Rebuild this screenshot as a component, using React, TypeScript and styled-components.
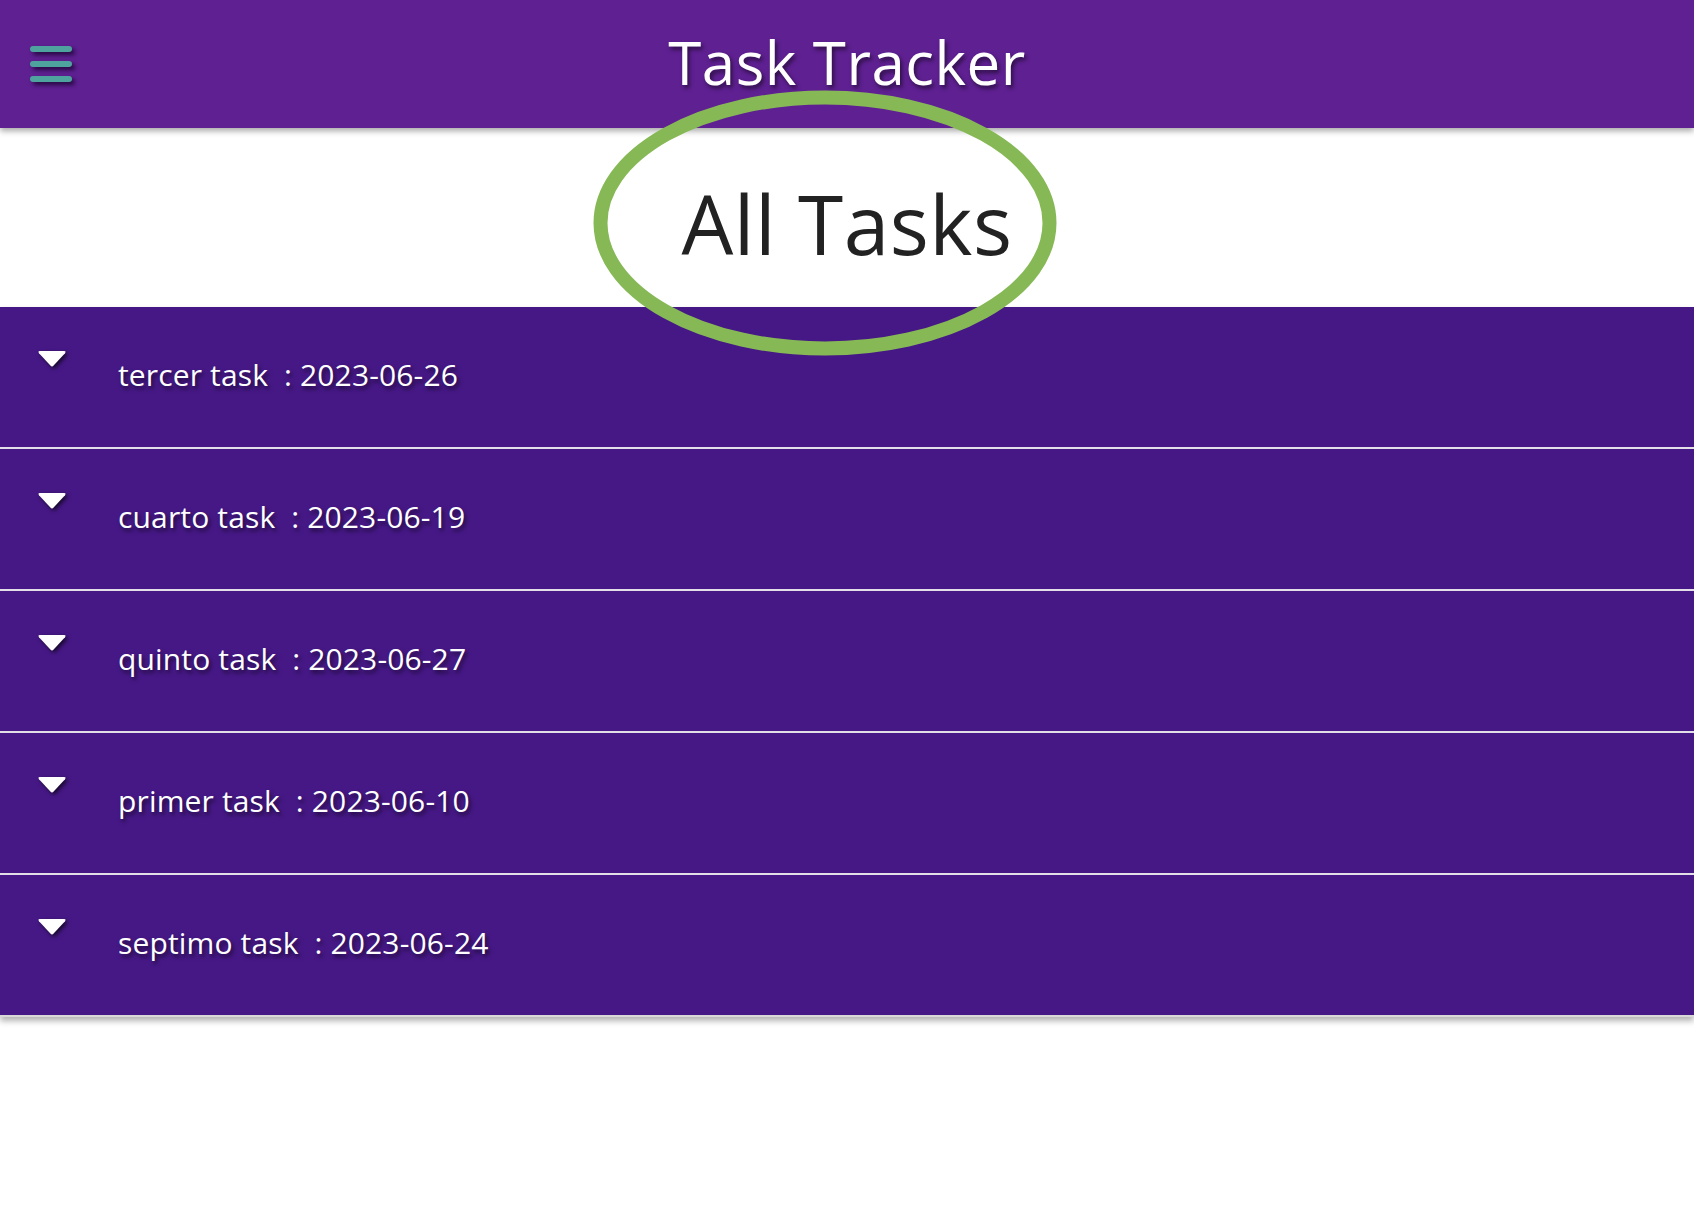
import React from "react";
import styled, { createGlobalStyle } from "styled-components";

const Global = createGlobalStyle`
  html, body { margin: 0; padding: 0; background: #ffffff; }
  body { font-family: "Open Sans", "Noto Sans", sans-serif; }
`;

const Page = styled.div`
  position: relative;
  min-height: 1208px;
  background: #ffffff;
  overflow: hidden;
`;

const Header = styled.header`
  position: relative;
  z-index: 2;
  height: 128px;
  background: #5f2092;
  box-shadow: 0 3px 6px rgba(0, 0, 0, 0.35);
  display: grid;
  grid-template-columns: 1fr auto 1fr;
  align-items: center;
`;

const Burger = styled.button`
  justify-self: start;
  margin-left: 30px;
  padding: 0;
  border: 0;
  background: transparent;
  display: flex;
  flex-direction: column;
  gap: 9px;
  cursor: pointer;
`;

const BurgerBar = styled.span`
  display: block;
  width: 42px;
  height: 6px;
  border-radius: 3px;
  background: #4fa39e;
  box-shadow: 3px 3px 4px rgba(20, 0, 40, 0.75);
`;

const Title = styled.h1`
  margin: 0 0 4px 0;
  color: #ffffff;
  font-weight: 400;
  font-size: 60px;
  letter-spacing: 0.5px;
  text-shadow: 2px 3px 4px rgba(0, 0, 0, 0.55);
`;

const Heading = styled.section`
  height: 179px;
  display: flex;
  align-items: center;
  justify-content: center;
`;

const HeadingText = styled.h2`
  margin: 10px 0 0 0;
  font-weight: 400;
  font-size: 82px;
  color: #222222;
  letter-spacing: 0.5px;
`;

const Highlight = styled.svg`
  position: absolute;
  left: 593px;
  top: 90px;
  width: 464px;
  height: 266px;
  z-index: 3;
  pointer-events: none;
`;

const List = styled.ul`
  list-style: none;
  margin: 0;
  padding: 0;
  box-shadow: 0 4px 6px rgba(0, 0, 0, 0.3);
`;

const Row = styled.li`
  height: 140px;
  background: #461886;
  border-bottom: 2px solid #e2dfe8;
  display: flex;
  align-items: flex-start;
  &:last-child { border-bottom-color: #d8d8d8; }
`;

const Toggle = styled.svg`
  margin: 42px 0 0 37px;
  width: 30px;
  height: 20px;
  flex: none;
  filter: drop-shadow(2px 2px 2px rgba(0, 0, 0, 0.7));
`;

const RowText = styled.span`
  margin: 48px 0 0 51px;
  color: #ffffff;
  font-size: 30px;
  line-height: 40px;
  letter-spacing: 0.15px;
  text-shadow: 2px 3px 4px rgba(0, 0, 0, 0.6);
  white-space: pre;
`;

const tasks = [
  { name: "tercer task", date: "2023-06-26" },
  { name: "cuarto task", date: "2023-06-19" },
  { name: "quinto task", date: "2023-06-27" },
  { name: "primer task", date: "2023-06-10" },
  { name: "septimo task", date: "2023-06-24" },
];

export default function App() {
  return (
    <Page>
      <Global />
      <Header>
        <Burger aria-label="menu">
          <BurgerBar />
          <BurgerBar />
          <BurgerBar />
        </Burger>
        <Title>Task Tracker</Title>
        <span />
      </Header>
      <Heading>
        <HeadingText>All Tasks</HeadingText>
      </Heading>
      <Highlight viewBox="0 0 464 266">
        <ellipse cx="232" cy="133" rx="224.5" ry="125.5" fill="none" stroke="#86b955" strokeWidth="14" />
      </Highlight>
      <List>
        {tasks.map((t) => (
          <Row key={t.name}>
            <Toggle viewBox="0 0 30 20">
              <path d="M3 2 H27 Q29.5 2 28 4.2 L16.6 16.6 Q15 18.3 13.4 16.6 L2 4.2 Q0.5 2 3 2 Z" fill="#ffffff" />
            </Toggle>
            <RowText>{`${t.name}  : ${t.date}`}</RowText>
          </Row>
        ))}
      </List>
    </Page>
  );
}
